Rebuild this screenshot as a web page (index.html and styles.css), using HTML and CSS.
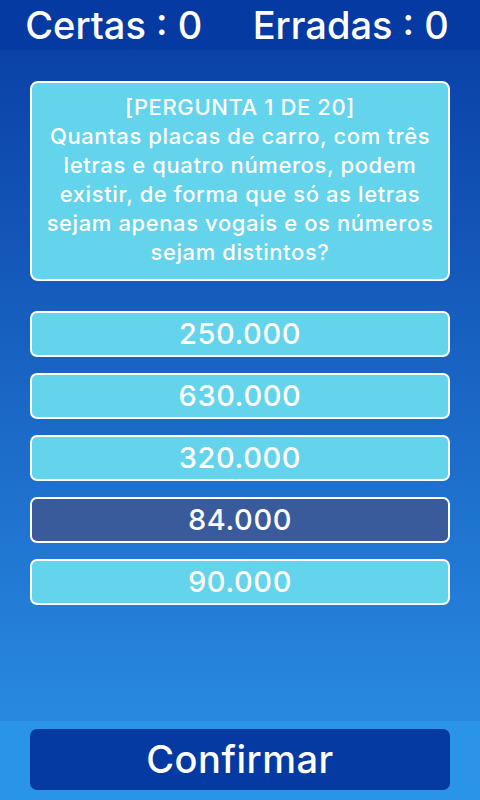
FILE: index.html
```html
<!DOCTYPE html>
<html lang="pt">
<head>
	<meta charset="UTF-8">
	<title>Quiz</title>
	<link rel="stylesheet" href="styles.css">
</head>
<body>
	<div class="app">
		<div class="placar">
			<span>Certas : 0</span>
			<span>Erradas : 0</span>
		</div>

		<div class="conteudo">
			<div class="pergunta">
				[PERGUNTA 1 DE 20]<br>
				Quantas placas de carro, com três letras e quatro números, podem existir, de forma que só as letras sejam apenas vogais e os números sejam distintos?
			</div>

			<ul class="opcoes">
				<li>250.000</li>
				<li>630.000</li>
				<li>320.000</li>
				<li class="active">84.000</li>
				<li>90.000</li>
			</ul>
		</div>

		<div class="rodape">
			<div class="btn">Confirmar</div>
		</div>
	</div>
</body>
</html>
```

FILE: styles.css
```css
*{
	margin: 0;
	padding: 0;
	box-sizing: border-box;
}
ul,li{
	list-style: none;
}
body{
	font-family: "Inter", "Noto Sans", sans-serif;
	font-weight: 500;
	color: #ffffff;
}
.app{
	width: 480px;
	height: 800px;
	display: flex;
	flex-direction: column;
}
/*顶部计分*/
.placar{
	height: 50px;
	background: #063aa3;
	display: flex;
	justify-content: space-around;
	align-items: center;
	font-size: 38px;
	padding: 0 6px 0 0;
}
.conteudo{
	flex: 1;
	background: linear-gradient(#0b42a8, #2889e0);
	padding: 31px 30px 0;
}
.pergunta{
	height: 200px;
	background: #64d3ec;
	border: 2px solid #ffffff;
	border-radius: 8px;
	text-align: center;
	font-size: 22px;
	line-height: 29px;
	letter-spacing: 0.6px;
	padding: 10px 8px;
}
.opcoes{
	margin-top: 30px;
	display: flex;
	flex-direction: column;
	gap: 16px;
}
.opcoes li{
	height: 46px;
	background: #64d3ec;
	border: 2px solid #ffffff;
	border-radius: 7px;
	text-align: center;
	font-size: 29px;
	line-height: 42px;
	letter-spacing: 0.6px;
}
.opcoes li.active{
	background: #3a5b9b;
}
.rodape{
	height: 79px;
	background: #2a95e8;
	padding: 8px 30px 10px;
}
.btn{
	height: 61px;
	background: #063aa3;
	border-radius: 7px;
	text-align: center;
	font-size: 38px;
	line-height: 61px;
	letter-spacing: 0.5px;
}
```
